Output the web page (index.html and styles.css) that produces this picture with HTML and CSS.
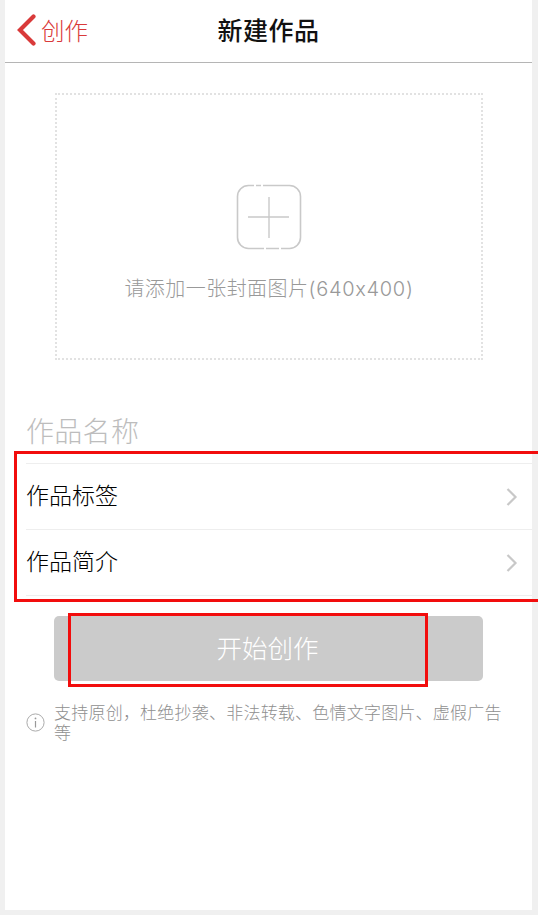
FILE: index.html
```html
<!DOCTYPE html>
<html lang="zh-CN">
<head>
<meta charset="utf-8">
<title>新建作品</title>
<link rel="stylesheet" href="styles.css">
</head>
<body>
<div class="screen">
  <header class="nav">
    <a class="back">
      <svg class="back-icon" width="20" height="32" viewBox="0 0 20 32"><path d="M16.5 2.5 L3 16 L16.5 29.5" fill="none" stroke="#d93a3a" stroke-width="4.2" stroke-linecap="round" stroke-linejoin="miter"/></svg>
      <span>创作</span>
    </a>
    <h1 class="title">新建作品</h1>
  </header>
  <main class="content">
    <div class="cover">
      <svg class="plus" width="66" height="66" viewBox="0 0 66 66">
        <rect x="1.5" y="1.5" width="63" height="63" rx="11" fill="none" stroke="#c9c9c9" stroke-width="1.6"/>
        <path d="M18 1.5h2M25 1.5h2M28 64.5h2M43 64.5h2" stroke="#fff" stroke-width="3"/>
        <path d="M12 33H53M33 13V54" stroke="#c9c9c9" stroke-width="1.4"/>
      </svg>
      <p class="cover-text">请添加一张封面图片<span class="latin">(640x400)</span></p>
    </div>
    <div class="name">作品名称</div>
    <ul class="rows">
      <li class="row"><span class="row-label">作品标签</span><svg width="14" height="20" viewBox="0 0 14 20"><path d="M2.5 2 L10.5 10 L2.5 18" fill="none" stroke="#c8c8c8" stroke-width="2.2"/></svg></li>
      <li class="row"><span class="row-label">作品简介</span><svg width="14" height="20" viewBox="0 0 14 20"><path d="M2.5 2 L10.5 10 L2.5 18" fill="none" stroke="#c8c8c8" stroke-width="2.2"/></svg></li>
    </ul>
    <button class="start"><span class="start-label">开始创作</span></button>
    <div class="note">
      <svg class="info" width="19" height="19" viewBox="0 0 19 19"><circle cx="9.5" cy="9.5" r="8.6" fill="none" stroke="#aaa" stroke-width="1"/><path d="M9.5 8V14.5" stroke="#999" stroke-width="1.2"/><circle cx="9.5" cy="5.4" r=".9" fill="#999"/></svg>
      <p>支持原创，杜绝抄袭、非法转载、色情文字图片、虚假广告等</p>
    </div>
  </main>
</div>
<div class="mark mark-rows"></div>
<div class="mark mark-btn"></div>
</body>
</html>
```
FILE: styles.css
```css
* { box-sizing: border-box; }
html, body { margin: 0; padding: 0; }
body {
  width: 538px;
  height: 915px;
  background: #f0f0f0;
  position: relative;
  overflow: hidden;
  font-family: "Noto Sans CJK SC", "Noto Sans", sans-serif;
  padding: 0 6px 5px 5px;
}
.screen {
  width: 527px;
  height: 910px;
  background: #fff;
}
.nav {
  height: 63px;
  border-bottom: 1px solid #b5b5b5;
  position: relative;
  display: flex;
  align-items: center;
  justify-content: center;
}
.back {
  position: absolute;
  left: 12px;
  top: 14px;
  display: flex;
  align-items: center;
  gap: 4px;
  color: #d93a3a;
  font-size: 23.5px;
  font-weight: 300;
  line-height: 32px;
}
.back-icon { display: block; }
.title {
  margin: 0 0 4px;
  font-size: 25px;
  font-weight: 500;
  color: #111;
  line-height: 34px;
  letter-spacing: .5px;
}
.content { display: flex; flex-direction: column; }
.cover {
  margin: 30px 0 0 50px;
  width: 428px;
  height: 267px;
  border: 2px dotted #e2e2e2;
  display: flex;
  flex-direction: column;
  align-items: center;
  padding-top: 89px;
}
.plus { display: block; }
.cover-text {
  margin: 23px 0 0;
  font-size: 20px;
  font-weight: 300;
  line-height: 30px;
  color: #999;
  letter-spacing: .45px;
  white-space: nowrap;
}
.latin {
  font-family: "Inter", sans-serif;
  font-weight: 300;
  letter-spacing: .7px;
}
.name {
  margin: 51px 0 0 21px;
  font-size: 28px;
  font-weight: 300;
  line-height: 38px;
  letter-spacing: .3px;
  color: #bdbdbd;
}
.rows {
  list-style: none;
  margin: 14px 0 0 21px;
  padding: 0;
  border-top: 1px solid #eee;
}
.row {
  height: 66px;
  border-bottom: 1px solid #eee;
  display: flex;
  align-items: center;
  justify-content: space-between;
  padding-right: 13px;
  font-size: 23px;
  font-weight: 300;
  color: #000;
}
.row-label { transform: translateY(-3px); }
.start {
  margin: 20px 0 0 49px;
  width: 429px;
  height: 65px;
  border: 0;
  border-radius: 5px;
  background: #cbcbcb;
  color: #fff;
  font-family: inherit;
  font-size: 25.5px;
  font-weight: 300;
  padding: 0;
}
.start-label { display: block; transform: translate(-1px, -2px); }
.note {
  margin: 21px 0 0 21px;
  width: 480px;
  display: flex;
  align-items: center;
  gap: 9px;
}
.info { flex: none; }
.note p {
  margin: 0;
  font-size: 17px;
  font-weight: 300;
  line-height: 20px;
  letter-spacing: .22px;
  color: #8f8f8f;
}
.mark {
  position: absolute;
  border: 3px solid #f20d0d;
}
.mark-rows { left: 14px; top: 451px; width: 530px; height: 151px; }
.mark-btn { left: 68px; top: 613px; width: 360px; height: 74px; }
```
